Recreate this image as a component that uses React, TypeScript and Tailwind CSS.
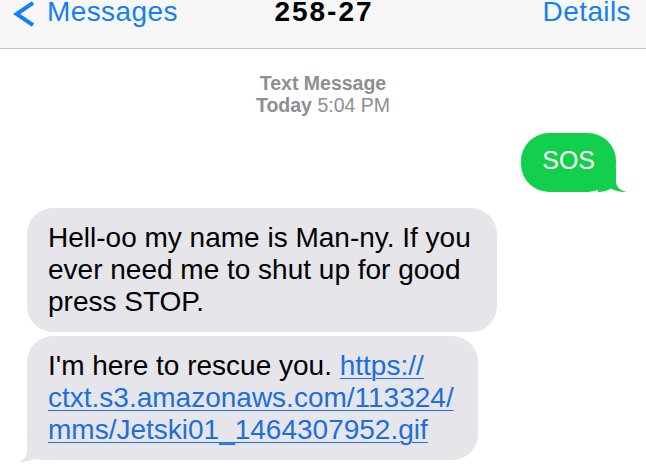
import React from "react";

export default function App() {
  return (
    <div className="w-[646px] h-[470px] overflow-hidden bg-white font-['Liberation_Sans',Arial,sans-serif] flex flex-col">
      {/* Header */}
      <div className="h-[49px] shrink-0 bg-[#f7f7f7] border-b border-[#c6c6c8] grid grid-cols-[1fr_auto_1fr] items-start">
        <div className="flex items-start pl-[12px]">
          <svg width="24" height="28" viewBox="0 0 24 28" className="shrink-0">
            <polyline
              points="21,2.8 4.6,14 21,25.2"
              fill="none"
              stroke="#147efb"
              strokeWidth="4"
              strokeLinejoin="miter"
            />
          </svg>
          <span className="ml-[11px] text-[28px] leading-[24px] tracking-[0.4px] text-[#147efb]">
            Messages
          </span>
        </div>
        <div className="text-[28px] leading-[24px] font-bold tracking-[2px] text-black pl-[2px]">
          258-27
        </div>
        <div className="justify-self-end pr-[15px] text-[28px] leading-[24px] tracking-[0.4px] text-[#147efb]">
          Details
        </div>
      </div>

      {/* Timestamp */}
      <div className="mt-[23px] text-center text-[19.5px] leading-[22px] text-[#8e8e93]">
        <div className="font-bold">Text Message</div>
        <div>
          <span className="font-bold">Today</span> 5:04 PM
        </div>
      </div>

      {/* Outgoing bubble */}
      <div className="mt-[17px] self-end mr-[30px] relative">
        <div className="relative z-10 h-[59px] px-[21px] pb-[4px] rounded-[28px] bg-[#12d04b] flex items-center text-white text-[25px] leading-none">
          SOS
        </div>
        <svg
          width="30"
          height="26"
          viewBox="0 0 30 26"
          className="absolute right-[-12px] bottom-[-1px]"
        >
          <path
            d="M18 0 L18 14 C18 20 22 23.5 28.5 25 C23 25.4 17 24 13 21.5 C10 23.5 5 25 0 25 L0 0 Z"
            fill="#12d04b"
          />
        </svg>
      </div>

      {/* Incoming bubble 1 */}
      <div className="mt-[16px] ml-[27px] w-[470px] rounded-[26px] bg-[#e5e5ea] py-[14px] pl-[21px] text-[28px] leading-[32px] text-black whitespace-nowrap">
        Hell-oo my name is Man-ny. If you
        <br />
        ever need me to shut up for good
        <br />
        press STOP.
      </div>

      {/* Incoming bubble 2 */}
      <div className="mt-[4px] ml-[27px] relative w-[451px]">
        <div className="relative z-10 rounded-[26px] bg-[#e5e5ea] py-[14px] pl-[21px] text-[28px] leading-[32px] text-black whitespace-nowrap">
          I'm here to rescue you.{" "}
          <span className="text-[#1c6fdc] underline decoration-1 underline-offset-[3px]">
            https://
            <br />
            ctxt.s3.amazonaws.com/113324/
            <br />
            mms/Jetski01_1464307952.gif
          </span>
        </div>
        <svg
          width="30"
          height="26"
          viewBox="0 0 30 26"
          className="absolute left-[-10px] bottom-[-2px]"
        >
          <path
            d="M10 0 L10 15 C10 21 6 24.5 1.3 25.8 C7 26.2 13 25 17 22.5 C20 24 25 24 30 24 L30 0 Z"
            fill="#e5e5ea"
          />
        </svg>
      </div>
    </div>
  );
}
